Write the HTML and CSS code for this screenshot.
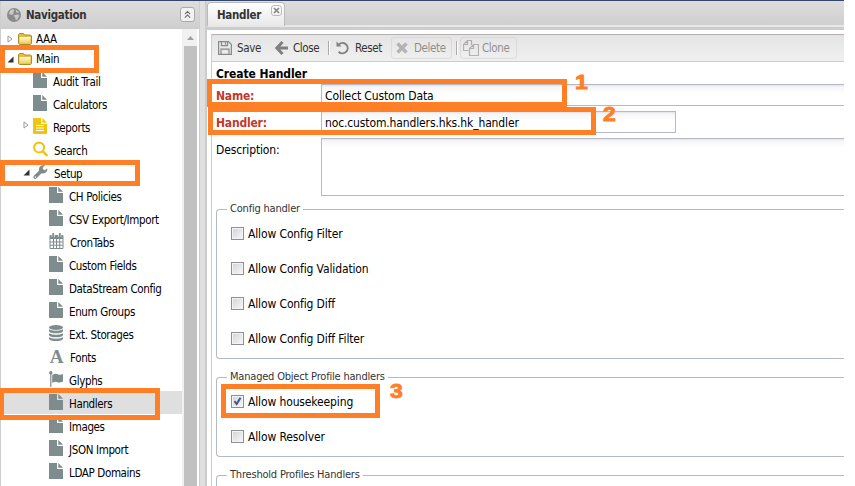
FILE: index.html
```
<!DOCTYPE html>
<html lang="en">
<head>
<meta charset="utf-8">
<title>Handler</title>
<link rel="stylesheet" href="styles.css">
</head>
<body>
<svg width="0" height="0" class="defs">
  <defs>
    <linearGradient id="fold" x1="0" y1="0" x2="0" y2="1"><stop offset="0" stop-color="#fffbd0"/><stop offset="1" stop-color="#f0cf58"/></linearGradient>
    <symbol id="folder" viewBox="0 0 14 12"><path d="M.5 10.5v-9l1-1h4l1 1.500h6l1 1v7.500l-1 1h-11z" fill="#e5bd45" stroke="#b08a28"/><path d="M1.500 4h11v6.500h-11z" fill="url(#fold)"/></symbol>
    <symbol id="file" viewBox="0 0 14 16"><path d="M0 0h8v6h6v10H0zM9.300 0 14 4.700H9.300z" fill="currentColor"/></symbol>
    <symbol id="report" viewBox="0 0 14 16"><path d="M0 0h8v6h6v10H0zM9.300 0 14 4.700H9.300z" fill="currentColor"/><path d="M3 7.500h8M3 10h8M3 12.500h8" stroke="#fff"/></symbol>
    <symbol id="search" viewBox="0 0 16 16"><circle cx="6.500" cy="6.500" r="5.300" fill="none" stroke="currentColor" stroke-width="2.200"/><path d="m10.500 10.500 4 4" stroke="currentColor" stroke-width="2.800" stroke-linecap="round"/></symbol>
    <symbol id="wrench" viewBox="0 0 16 16"><path d="M9.200 1.100A4.700 4.700 0 0 1 13 .9L10.500 2.800v2l1.900 1.200 2.900-1.700a4.700 4.700 0 0 1-6.200 5L3.800 14.700a1.900 1.900 0 0 1-2.900-2.800l5.600-5.300a4.600 4.600 0 0 1 2.700-5.500z" fill="currentColor"/><circle cx="2.500" cy="13.200" r=".8" fill="#fff"/></symbol>
    <symbol id="calendar" viewBox="0 0 15 16"><path d="M1 2.500h13V15.500H1zM1 5.500h13M1 9h13M1 12.200h13M4.500 5.500v10M7.500 5.500v10M10.700 5.500v10" fill="none" stroke="currentColor"/><path d="M1 2h13v3H1z" fill="currentColor"/><path d="M4.200 0v4M10.800 0v4" stroke="#fff" stroke-width="3"/><path d="M4.200 0v4M10.800 0v4" stroke="currentColor" stroke-width="1.800"/></symbol>
    <symbol id="database" viewBox="0 0 14 16"><g fill="currentColor"><ellipse cx="7" cy="2.500" rx="7" ry="2.500"/><path d="M0 4.200q7 3.200 14 0v2q-1 2-7 2t-7-2zM0 8.200q7 3.200 14 0v2q-1 2-7 2t-7-2zM0 12.200q7 3.200 14 0v1.500q-1 2.300-7 2.300t-7-2.300z"/></g></symbol>
    <symbol id="flag" viewBox="0 0 14 16"><g fill="currentColor"><circle cx="1.800" cy="1.800" r="1.700"/><path d="M1.200 2h1.200v14H1.200zM3.200 4q3-2 5.500-.8T14 2.900v7.600q-3 1.800-5.500.7t-5.300.8z"/></g></symbol>
    <symbol id="open" viewBox="0 0 7 7"><path d="M6.500.5v6h-6z" fill="#333"/></symbol>
    <symbol id="shut" viewBox="0 0 6 8"><path d="M1 .9 5 4 1 7.100z" fill="#fff" stroke="#999"/></symbol>
  </defs>
</svg>
<div class="app">
  <aside class="nav">
    <header class="nav-head">
      <svg class="globe" width="14" height="14" viewBox="0 0 14 14"><circle cx="7" cy="7" r="7" fill="#8b8b8b"/><path d="M3 2.500 6 1l1.500 1.500L6 4l1 1-2 2L2 6zM9 2l3 2-1 1-2-1zM7.500 7l3.500-.5 1.500 1L10 12l-1.500-.5L8 9 6.500 8z" fill="#c9c9c9"/></svg>
      <b>Navigation</b>
      <span class="collapse"><svg width="15" height="15" viewBox="0 0 15 15"><path d="m4.500 7 3-3 3 3M4.500 11l3-3 3 3" fill="none" stroke="#666" stroke-width="1.300"/></svg></span>
    </header>
    <div class="nav-body">
      <ul class="tree">
        <li class="d1"><svg class="arrow shut"><use href="#shut"/></svg><svg class="folder"><use href="#folder"/></svg>AAA</li>
        <li class="d1"><svg class="arrow"><use href="#open"/></svg><svg class="folder"><use href="#folder"/></svg>Main</li>
        <li class="d2"><svg class="ico"><use href="#file"/></svg>Audit Trail</li>
        <li class="d2"><svg class="ico"><use href="#file"/></svg>Calculators</li>
        <li class="d2"><svg class="arrow shut"><use href="#shut"/></svg><svg class="ico yellow"><use href="#report"/></svg>Reports</li>
        <li class="d2"><svg class="ico wide yellow"><use href="#search"/></svg>Search</li>
        <li class="d2"><svg class="arrow"><use href="#open"/></svg><svg class="ico wide"><use href="#wrench"/></svg>Setup</li>
        <li class="d3"><svg class="ico"><use href="#file"/></svg>CH Policies</li>
        <li class="d3"><svg class="ico"><use href="#file"/></svg>CSV Export/Import</li>
        <li class="d3"><svg class="ico wide"><use href="#calendar"/></svg>CronTabs</li>
        <li class="d3"><svg class="ico"><use href="#file"/></svg>Custom Fields</li>
        <li class="d3"><svg class="ico"><use href="#file"/></svg>DataStream Config</li>
        <li class="d3"><svg class="ico"><use href="#file"/></svg>Enum Groups</li>
        <li class="d3"><svg class="ico"><use href="#database"/></svg>Ext. Storages</li>
        <li class="d3"><span class="ico wide letter">A</span>Fonts</li>
        <li class="d3"><svg class="ico"><use href="#flag"/></svg>Glyphs</li>
        <li class="d3 current"><svg class="ico"><use href="#file"/></svg>Handlers</li>
        <li class="d3"><svg class="ico"><use href="#file"/></svg>Images</li>
        <li class="d3"><svg class="ico"><use href="#file"/></svg>JSON Import</li>
        <li class="d3"><svg class="ico"><use href="#file"/></svg>LDAP Domains</li>
      </ul>
      <div class="scroll"><svg width="13" height="17" viewBox="0 0 13 17"><path d="M3 11h7L6.500 7z" fill="#a0a0a0"/></svg><i></i></div>
    </div>
  </aside>
  <main class="work">
    <div class="tabs"><div class="tab"><b>Handler</b><span class="tab-x"><svg width="9" height="9" viewBox="0 0 9 9"><path d="m2 2 5 5m0-5L2 7" stroke="#888" stroke-width="1.700"/></svg></span></div></div>
    <div class="panel">
      <div class="toolbar">
        <span class="btn save"><svg width="14" height="14" viewBox="0 0 14 14"><path d="M.6.6h9.900l2.900 2.900v9.900H.6zM3.500.6v4h6v-4M3 13.400V8.200h8v5.200M7.500 1.500v2" fill="none" stroke="#888" stroke-width="1.200"/></svg>Save</span>
        <span class="btn close"><svg width="14" height="14" viewBox="0 0 14 14"><path d="M7.500 1 1.800 7l5.700 6M2.500 7H13" fill="none" stroke="#808080" stroke-width="3"/></svg>Close</span>
        <i class="sep"></i>
        <span class="btn reset"><svg width="14" height="14" viewBox="0 0 14 14"><path d="M3 3.200a5.200 5.200 0 1 1-.3 7.500" fill="none" stroke="#808080" stroke-width="2"/><path d="M.5.500v5h5z" fill="#808080"/></svg>Reset</span>
        <span class="btn off delete"><svg width="12" height="12" viewBox="0 0 12 12"><path d="m1.500 1.500 9 9m0-9-9 9" stroke="#808080" stroke-width="3.500"/></svg>Delete</span>
        <i class="sep"></i>
        <span class="btn off clone"><svg width="16" height="16" viewBox="0 0 16 16"><path d="M5.500 10.500h-5V4.500l4-4h4V5M4.500.5v4h-4M15.500 4.500v11h-9v-7l4-4zM10.500 4.500v4h-4" fill="none" stroke="#777" stroke-width="1.200"/></svg>Clone</span>
      </div>
      <form class="form">
        <h1>Create Handler</h1>
        <div class="row"><label class="req">Name:</label><div class="field">Collect Custom Data</div></div>
        <div class="row"><label class="req">Handler:</label><div class="field short">noc.custom.handlers.hks.hk_handler</div></div>
        <div class="row desc"><label>Description:</label><div class="field area"></div></div>
        <section class="group g1"><h2>Config handler</h2>
          <p><i class="cb"></i>Allow Config Filter</p>
          <p><i class="cb"></i>Allow Config Validation</p>
          <p><i class="cb"></i>Allow Config Diff</p>
          <p><i class="cb"></i>Allow Config Diff Filter</p>
        </section>
        <section class="group g2"><h2>Managed Object Profile handlers</h2>
          <p><i class="cb"><svg width="11" height="11" viewBox="0 0 11 11"><path d="M2.500 5.200 4.700 8 8.500 1.800" fill="none" stroke="#41578f" stroke-width="2"/></svg></i>Allow housekeeping</p>
          <p><i class="cb"></i>Allow Resolver</p>
        </section>
        <section class="group g3"><h2>Threshold Profiles Handlers</h2></section>
      </form>
    </div>
  </main>
</div>
<div class="mark m-main"></div>
<div class="mark m-setup"></div>
<div class="mark m-handlers"></div>
<div class="mark m-name"></div>
<div class="mark m-handler"></div>
<div class="mark m-check"></div>
<span class="num n1">1</span>
<span class="num n2">2</span>
<span class="num n3">3</span>
</body>
</html>
```
FILE: styles.css
```
* { box-sizing: border-box; }
body { margin: 0; width: 855px; height: 486px; overflow: hidden; position: relative; background: #fff; color: #000; font: 11.5px/16px "DejaVu Sans Condensed", "DejaVu Sans", sans-serif; font-stretch: condensed; letter-spacing: -0.36px; white-space: nowrap; }
svg { display: block; flex: none; }
.defs { position: absolute; }
.app { display: flex; width: 844px; height: 486px; overflow: hidden; border-top: 1px solid #34466a; background: #dfdfdf; }

.nav { flex: none; width: 200px; display: flex; flex-direction: column; border-left: 1px solid #cecece; border-right: 1px solid #cecece; background: #fff; }
.nav-head { flex: none; display: flex; align-items: center; height: 28px; padding: 0 4px 0 6px; background: linear-gradient(#ddd, #cfcfcf); border-bottom: 1px solid #ccc; color: #333; font-size: 11.5px; letter-spacing: -0.3px; }
.nav-head b { margin: 1px 0 0 5px; }
.collapse { margin-left: auto; border: 1px solid #aaa; border-radius: 3px; background: #f2f2f2; }
.collapse svg { width: 13px; height: 13px; }
.nav-body { flex: 1; display: flex; min-height: 0; }
.tree { flex: none; width: 181px; margin: 0; padding: 0; list-style: none; overflow: hidden; }
.tree li { display: flex; align-items: center; height: 23px; position: relative; }
.tree .d1 { height: 20px; padding: 0 0 0 17px; }
.tree .d2 { padding: 3px 0 0 32px; }
.tree .d3 { padding: 3px 0 0 48px; }
.tree .current { background: #dfdfdf; }
.arrow { position: absolute; left: 6px; top: 7px; width: 7px; height: 7px; }
.d2 .arrow { left: 22px; top: 8px; }
.arrow.shut { width: 6px; height: 8px; top: 6px; }
.folder { width: 14px; height: 12px; margin: -1px 4px 0 0; }
.ico { width: 14px; height: 16px; margin: -5px 6px 0 0; color: #7f8c8d; }
.ico.wide { width: 15px; }
.yellow { color: #f1c40f; }
.letter { font: bold 19px/18px "Liberation Serif", serif; letter-spacing: 0; margin-top: -5px; text-align: center; }
.scroll { flex: none; width: 15px; padding-left: 2px; background: #f1f1f1; display: flex; flex-direction: column; }
.scroll i { flex: 1; width: 13px; background: #c1c1c1; }

.work { flex: 1; min-width: 0; margin-left: 5px; border-left: 2px solid #ccc; display: flex; flex-direction: column; background: #fff; }
.tabs { flex: none; height: 29px; background: linear-gradient(#ddd, #cfcfcf 24px, #e8e8e8 24px, #e8e8e8 26px, #ccc 26px); padding-top: 1px; }
.tab { display: flex; width: 78px; height: 24px; padding: 4px 0 0 9px; border: 1px solid #bbb; border-bottom: 0; border-radius: 4px 4px 0 0; background: linear-gradient(#fff, #e8e8e8); color: #333; font-size: 11.5px; letter-spacing: -0.3px; position: relative; }
.tab-x { position: absolute; right: 2px; top: 2px; border: 1px solid #bbb; border-radius: 3px; }
.panel { flex: 1; margin: 4px 0 0 4px; border-left: 1px solid #ccc; }
.toolbar { display: flex; align-items: center; height: 28px; border-top: 1px solid #b5afaf; border-bottom: 1px solid #ccc; background: linear-gradient(#e4e4e4, #f0f0f0); color: #333; letter-spacing: -0.38px; }
.btn { display: flex; align-items: center; gap: 5px; height: 22px; }
.save { width: 57px; padding-left: 6px; }
.close { width: 59px; padding-left: 6px; gap: 4px; }
.sep { width: 2px; height: 14px; background: #aaa; border-right: 1px solid #fff; }
.reset { width: 61px; padding-left: 6px; }
.off { opacity: .5; border: 1px solid #ccc; border-radius: 3px; }
.delete { width: 61px; padding-left: 4px; margin-right: 4px; gap: 6px; }
.clone { width: 57px; padding-left: 2px; margin-left: 2px; gap: 3px; }
.form { padding-left: 4px; font-size: 12px; letter-spacing: -0.13px; }
h1 { margin: 4px 0 2px; height: 16px; font-size: 12px; line-height: 16px; letter-spacing: -0.08px; }
.row { display: flex; height: 22px; margin-bottom: 5px; }
.row label { width: 105px; padding-top: 4px; }
.row .req { color: #c0392b; font-weight: bold; letter-spacing: -0.2px; }
.field { flex: 1; height: 22px; padding: 3px 3px 0; border: 1px solid #b5b8c8; border-right: 0; background: linear-gradient(#e2e4e8, #f6f6f6 2px, #fff 9px); }
.short { flex: none; width: 355px; border-right: 1px solid #b5b8c8; }
.desc { height: 58px; margin-bottom: 13px; }
.area { height: 58px; }
.group { border: 1px solid #b5b8c8; border-right: 0; border-radius: 4px 0 0 4px; padding-left: 14px; margin-bottom: 18px; }
.g1 { height: 150px; }
.g2 { height: 80px; }
.g3 { height: 60px; }
.group h2 { width: max-content; height: 16px; margin: -9px 0 3px -4px; padding: 0 3px; background: #fff; color: #333; font-size: 11px; font-weight: normal; line-height: 16px; letter-spacing: -0.2px; }
.group p { display: flex; align-items: center; height: 26px; margin: 0 0 9px; padding-top: 1px; }
.cb { width: 13px; height: 13px; margin: -1px 4px 0 0; border: 1px solid #8e8f8f; background: linear-gradient(135deg, #d0d3d8, #f8f8f8); box-shadow: inset 0 0 0 1px #f4f4f4; }

.mark { position: absolute; border: 5px solid #ff7f27; }
.m-main { left: 0; top: 45px; width: 99px; height: 28px; }
.m-setup { left: 0; top: 160px; width: 140px; height: 26px; }
.m-handlers { left: 0; top: 388px; width: 160px; height: 32px; border-left-width: 4px; }
.m-name { left: 207px; top: 79px; width: 360px; height: 28px; }
.m-handler { left: 208px; top: 107px; width: 388px; height: 28px; }
.m-check { left: 221px; top: 384px; width: 159px; height: 34px; }
.num { position: absolute; color: #ff7f27; font: bold 20px/20px "Liberation Sans", sans-serif; letter-spacing: 0; -webkit-text-stroke: .9px #ff7f27; transform: scaleX(1.15); transform-origin: 0 0; }
.n1 { left: 575px; top: 72px; }
.n2 { left: 603px; top: 104px; }
.n3 { left: 390px; top: 381px; }
```
